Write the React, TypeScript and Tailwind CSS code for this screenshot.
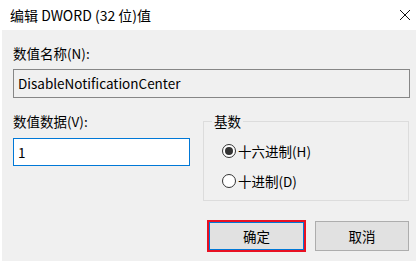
export default function App() {
  return (
    <div
      className="w-[416px] h-[261px] bg-white flex flex-col text-[13.5px] text-black overflow-hidden"
      style={{ fontFamily: '"Noto Sans CJK SC", "Liberation Sans", sans-serif' }}
    >
      {/* title bar */}
      <div className="h-[30px] flex items-center justify-between pl-[10px] pr-[5px] shrink-0">
        <span className="leading-[20px] text-[14px]">编辑 DWORD (32 位)值</span>
        <svg width="12" height="12" viewBox="0 0 12 12">
          <path d="M1 1 L11 11 M11 1 L1 11" stroke="#111" strokeWidth="1" fill="none" />
        </svg>
      </div>

      {/* body */}
      <div className="flex-1 bg-[#f0f0f0] ml-[2px] pl-[11px] pr-[6px]">
        <div className="mt-[13px] leading-[20px] h-[20px]">数值名称(N):</div>
        <div className="mt-[6px] h-[29px] border border-[#868686] bg-[#f0f0f0] flex items-center pl-[4px]">
          DisableNotificationCenter
        </div>

        <div className="flex mt-[13px]">
          <div className="w-[177px] shrink-0">
            <div className="leading-[20px] h-[20px]">数值数据(V):</div>
            <div className="mt-[7px] h-[28px] border border-[#0078d7] bg-white flex items-center pl-[4px]">
              1
            </div>
          </div>

          <div className="relative ml-[13px] mt-[10px] w-[206px] h-[80px] border border-[#dcdcdc] pl-[18px] pt-[20px] flex flex-col gap-[12px]">
            <span className="absolute -top-[11px] left-[8px] px-[2px] bg-[#f0f0f0] leading-[20px]">基数</span>
            <label className="flex items-center h-[18px] gap-[2px]">
              <span className="w-[14px] h-[14px] rounded-full border border-[#333] bg-white flex items-center justify-center">
                <span className="w-[8px] h-[8px] rounded-full bg-[#333]" />
              </span>
              <span className="leading-[18px]">十六进制(H)</span>
            </label>
            <label className="flex items-center h-[18px] gap-[2px]">
              <span className="w-[14px] h-[14px] rounded-full border border-[#333] bg-white" />
              <span className="leading-[18px]">十进制(D)</span>
            </label>
          </div>
        </div>

        <div className="flex justify-end items-center mt-[19px] pr-[1px] gap-[9px]">
          <div className="border-2 border-[#e81123]">
            <button className="w-[95px] h-[28px] border border-[#0078d7] bg-[#e1e1e1] flex items-center justify-center">
              确定
            </button>
          </div>
          <button className="w-[94px] h-[30px] border border-[#adadad] bg-[#e1e1e1] flex items-center justify-center">
            取消
          </button>
        </div>
      </div>
    </div>
  );
}
